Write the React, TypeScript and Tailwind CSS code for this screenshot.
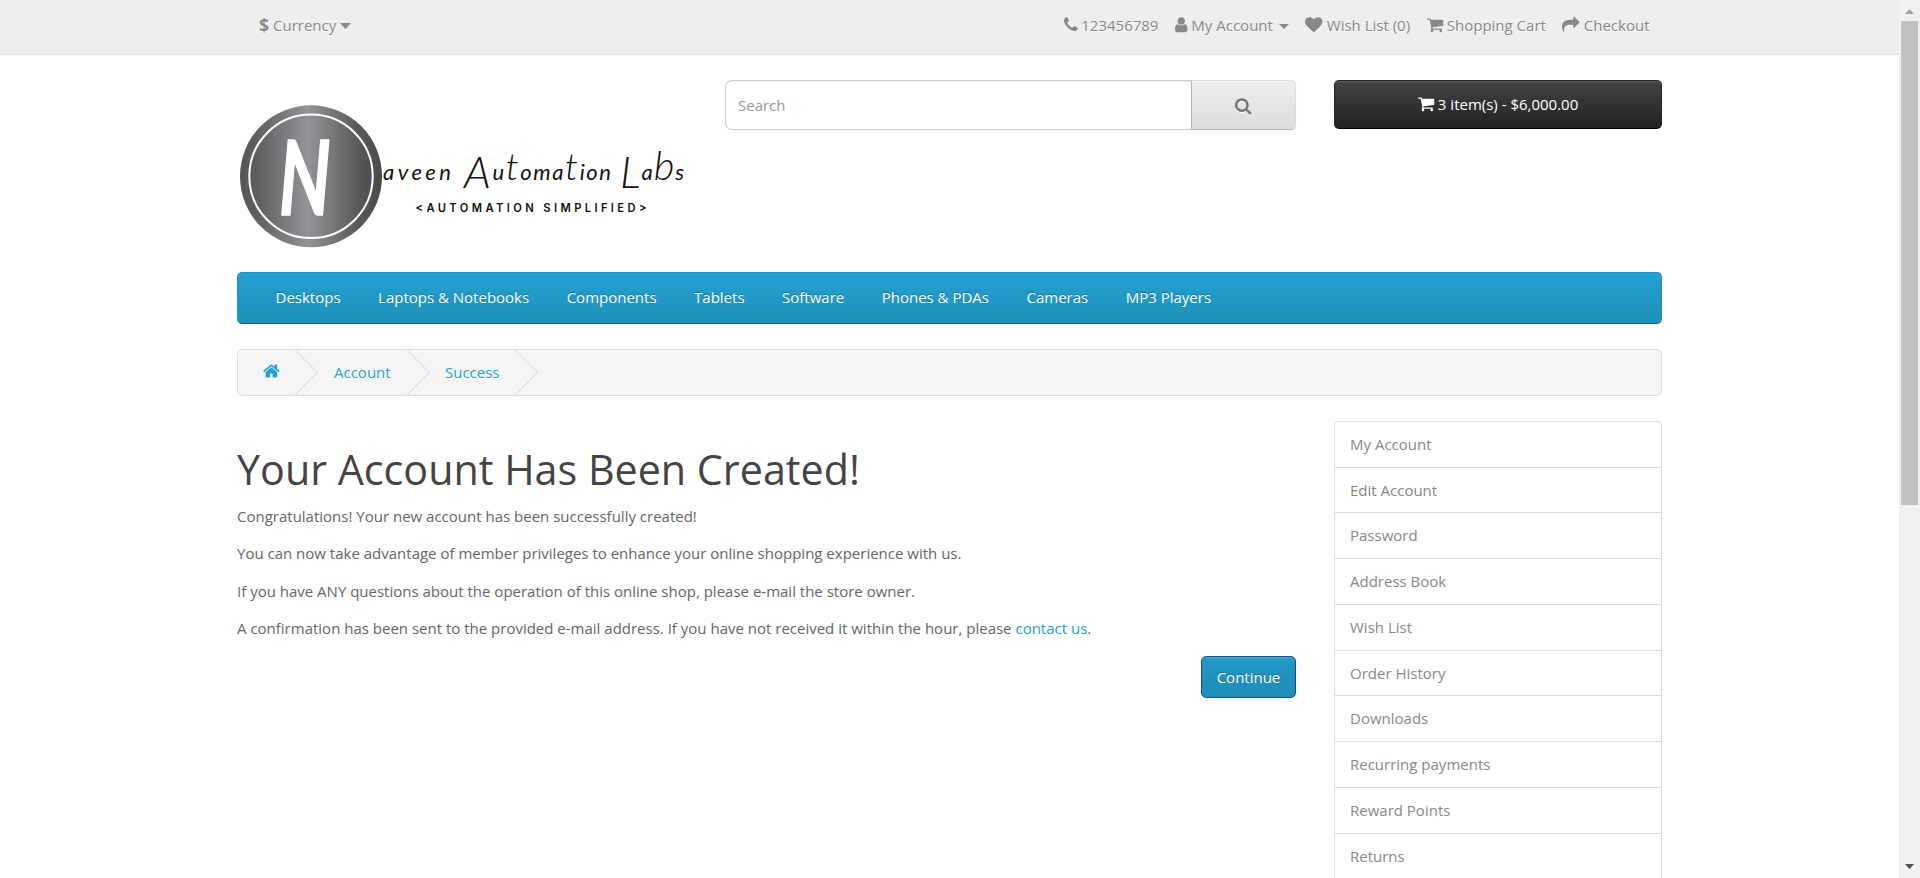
import React from "react";

type GlyphName = "phone" | "user" | "heart" | "cart" | "share" | "search" | "home";

const glyphs: Record<GlyphName, { x: number; w: number; d: string }> = {
  phone: {
    x: 192,
    w: 1408,
    d: "M1600 1240q0 27-10 70.5t-21 68.5q-21 50-122 106-94 51-186 51-27 0-53-3.5t-57.5-12.5-47-14.5-55.5-20.5-49-18q-98-35-175-83-127-79-264-216t-216-264q-48-77-83-175-3-9-18-49t-20.5-55.5-14.5-47-12.5-57.5-3.5-53q0-92 51-186 56-101 106-122 25-11 68.5-21t70.5-10q14 0 21 3 18 6 53 76 11 19 30 54t35 63.5 31 53.5q3 4 17.5 25t21.5 35.5 7 28.5q0 20-28.5 50t-62 55-62 53-28.5 46q0 9 5 22.5t8.5 20.5 14 24 11.5 19q76 137 174 235t235 174q2 1 19 11.5t24 14 20.5 8.5 22.5 5q18 0 46-28.5t53-62 55-62 50-28.5q14 0 28.5 7t35.5 21.5 25 17.5q25 15 53.5 31t63.5 35 54 30q70 35 76 53 3 7 3 21z",
  },
  user: {
    x: 256,
    w: 1280,
    d: "M1536 1399q0 109-62.5 187t-150.5 78h-854q-88 0-150.5-78t-62.5-187q0-85 8.5-160.5t31.5-152 58.5-131 94-89 134.5-34.5q131 128 313 128t313-128q76 0 134.5 34.5t94 89 58.5 131 31.5 152 8.5 160.5zm-256-887q0 159-112.5 271.5t-271.5 112.5-271.5-112.5-112.5-271.5 112.5-271.5 271.5-112.5 271.5 112.5 112.5 271.5z",
  },
  heart: {
    x: 0,
    w: 1792,
    d: "M896 1664q-26 0-44-18l-624-602q-10-8-27.5-26t-55.5-65.5-68-97.5-53.5-121-23.5-138q0-220 127-344t351-124q62 0 126.5 21.5t120 58 95.5 68.5 76 68q36-36 76-68t95.5-68.5 120-58 126.5-21.5q224 0 351 124t127 344q0 221-229 450l-623 600q-18 18-44 18z",
  },
  cart: {
    x: 64,
    w: 1664,
    d: "M704 1536q0 52-38 90t-90 38-90-38-38-90 38-90 90-38 90 38 38 90zm896 0q0 52-38 90t-90 38-90-38-38-90 38-90 90-38 90 38 38 90zm128-1088v512q0 24-16.5 42.5t-40.5 21.5l-1044 122q13 60 13 70 0 16-24 64h920q26 0 45 19t19 45-19 45-45 19h-1024q-26 0-45-19t-19-45q0-11 8-31.5t16-36 21.5-40 15.5-29.5l-177-823h-204q-26 0-45-19t-19-45 19-45 45-19h256q16 0 28.5 6.5t19.5 15.5 13 24.5 8 26 5.5 29.5 4.5 26h1201q26 0 45 19t19 45z",
  },
  share: {
    x: 0,
    w: 1792,
    d: "M1792 640q0 26-19 45l-512 512q-19 19-45 19t-45-19-19-45v-256h-224q-98 0-175.5 6t-154 21.5-133 42.5-105.5 69.5-80 101-48.5 138.5-17.5 181q0 55 5 123 0 6 2.5 23.5t2.5 26.5q0 15-8.5 25t-23.5 10q-16 0-28-17-7-9-13-22t-13.5-30-10.5-24q-127-285-127-451 0-199 53-333 162-403 875-403h224v-256q0-26 19-45t45-19 45 19l512 512q19 19 19 45z",
  },
  search: {
    x: 64,
    w: 1664,
    d: "M1216 832q0-185-131.5-316.5t-316.5-131.5-316.5 131.5-131.5 316.5 131.5 316.5 316.5 131.5 316.5-131.5 131.5-316.5zm512 832q0 52-38 90t-90 38q-54 0-90-38l-343-342q-179 124-399 124-143 0-273.5-55.5t-225-150-150-225-55.5-273.5 55.5-273.5 150-225 225-150 273.5-55.5 273.5 55.5 225 150 150 225 55.5 273.5q0 220-124 399l343 343q37 37 37 90z",
  },
  home: {
    x: 64,
    w: 1664,
    d: "M1472 992v480q0 26-19 45t-45 19h-384v-384h-256v384h-384q-26 0-45-19t-19-45v-480q0-1 .5-3t.5-3l575-474 575 474q1 2 1 6zm223-69l-62 74q-8 9-21 11h-3q-13 0-21-7l-692-577-692 577q-12 8-24 7-13-2-21-11l-62-74q-8-10-7-23.5t11-21.5l719-599q32-26 76-26t76 26l244 204v-195q0-14 9-23t23-9h192q14 0 23 9t9 23v408l219 182q10 8 11 21.5t-7 23.5z",
  },
};

function Glyph({
  name,
  className = "",
  size = 17.5,
}: {
  name: GlyphName;
  className?: string;
  size?: number;
}) {
  const g = glyphs[name];
  return (
    <svg
      className={`inline-block shrink-0 align-[-2.5px] ${className}`}
      width={(g.w / 1792) * size}
      height={size}
      viewBox={`${g.x} 0 ${g.w} 1792`}
      fill="currentColor"
      overflow="visible"
    >
      <path d={g.d} />
    </svg>
  );
}

function Logo() {
  return (
    <svg className="block" width="455" height="152" viewBox="237 100 455 152">
      <defs>
        <linearGradient id="disc" x1="0" x2="1" y1="0" y2="0">
          <stop offset="0" stopColor="#565656" />
          <stop offset="0.1" stopColor="#5c5c5c" />
          <stop offset="0.48" stopColor="#919398" />
          <stop offset="0.56" stopColor="#85878a" />
          <stop offset="0.85" stopColor="#565656" />
          <stop offset="1" stopColor="#4a4a49" />
        </linearGradient>
      </defs>
      <circle cx="311" cy="176.3" r="71" fill="url(#disc)" />
      <circle cx="311" cy="176.3" r="61.7" fill="none" stroke="#fff" strokeWidth="2" />
      <text
        transform="translate(279 215) scale(0.7 1)"
        fontFamily="Lato, sans-serif"
        fontStyle="italic"
        fontSize="103"
        fontWeight="700"
        fill="#fff"
        stroke="#fff"
        strokeWidth="1.5"
        strokeLinejoin="round"
      >
        N
      </text>
      <g fontFamily="Lato, sans-serif" fontStyle="italic" fill="#111" fontSize="22">
        <text x="383" y="180" textLength="68">
          aveen
        </text>
        <text x="464" y="180" textLength="147">
          <tspan dy="8" fontSize="44" fontWeight="300">
            A
          </tspan>
          <tspan dy="-8">u</tspan>
          <tspan fontSize="38" fontWeight="300">t</tspan>
          <tspan>oma</tspan>
          <tspan fontSize="38" fontWeight="300">t</tspan>
          <tspan>ion</tspan>
        </text>
        <text x="620" y="180" textLength="64">
          <tspan dy="8" fontSize="44" fontWeight="300">
            L
          </tspan>
          <tspan dy="-8">a</tspan>
          <tspan fontSize="40" fontWeight="300">b</tspan>
          <tspan>s</tspan>
        </text>
      </g>
      <text
        x="415.5"
        y="212"
        fontFamily="Inter, sans-serif"
        fontSize="11.2"
        fontWeight="600"
        fill="#111"
        textLength="231"
      >
        {"<AUTOMATION SIMPLIFIED>"}
      </text>
    </svg>
  );
}

function Chevron() {
  return (
    <svg className="block shrink-0" width="24" height="45" viewBox="0 0 24 45">
      <path d="M0 0L22.5 22.5L0 45" fill="none" stroke="#ddd" strokeWidth="1.1" />
    </svg>
  );
}

const navItems = [
  "Desktops",
  "Laptops & Notebooks",
  "Components",
  "Tablets",
  "Software",
  "Phones & PDAs",
  "Cameras",
  "MP3 Players",
];

const accountLinks = [
  "My Account",
  "Edit Account",
  "Password",
  "Address Book",
  "Wish List",
  "Order History",
  "Downloads",
  "Recurring payments",
  "Reward Points",
  "Returns",
];

function TopBar() {
  return (
    <div className="h-[55px] border-b border-[#e2e2e2] bg-[#eee] text-[#888] [text-shadow:0_1px_0_#fff]">
      <div className="mx-auto flex w-[1425px] justify-between pt-[13px]">
        <div className="flex items-center pl-[22px]">
          <strong className="text-[17.5px] leading-[25px]">$</strong>
          <span className="ml-[4px]">Currency</span>
          <svg className="ml-[4px] block" width="11" height="6" viewBox="0 0 11 6">
            <path d="M0 0H11L5.5 6Z" fill="currentColor" />
          </svg>
        </div>
        <div className="flex pr-[12.5px]">
          <span className="whitespace-pre">
            <Glyph name="phone" />
            {" "}123456789
          </span>
          <span className="ml-[16.5px] flex items-center">
            <span className="whitespace-pre">
              <Glyph name="user" />
              {" "}My Account
            </span>
            <svg className="ml-[6px] mt-[2px] block" width="10" height="5" viewBox="0 0 10 5">
              <path d="M0 0H10L5 5Z" fill="currentColor" />
            </svg>
          </span>
          <span className="ml-[16.5px] whitespace-pre">
            <Glyph name="heart" />
            {" "}Wish List (0)
          </span>
          <span className="ml-[16.5px] whitespace-pre">
            <Glyph name="cart" />
            {" "}Shopping Cart
          </span>
          <span className="ml-[16.5px] whitespace-pre">
            <Glyph name="share" />
            {" "}Checkout
          </span>
        </div>
      </div>
    </div>
  );
}

function Header() {
  return (
    <header className="flex h-[217px] pt-[25px]">
      <div className="w-[488px] pt-[20px]">
        <Logo />
      </div>
      <div className="flex h-[50px] w-[571px]">
        <div className="flex flex-1 items-center rounded-l-[7px] border border-r-0 border-[#ccc] bg-white pl-[12px] text-[#999] shadow-[inset_0_1px_1px_rgba(0,0,0,0.075)]">
          Search
        </div>
        <button className="flex w-[105px] items-center justify-center rounded-r-[5px] border border-t-[#ddd] border-r-[#ddd] border-b-[#b3b3b3] border-l-[#b7b7b7] bg-linear-to-b from-[#eee] to-[#ddd] text-[#777] shadow-[0_1px_2px_rgba(0,0,0,0.05)]">
          <Glyph name="search" className="mt-[1px] drop-shadow-[0_1px_0_#fff]" />
        </button>
      </div>
      <button className="ml-[38px] h-[49px] w-[328px] rounded-[5px] border border-[#222] border-b-black bg-linear-to-b from-[#444] to-[#222] whitespace-pre text-white shadow-[inset_0_1px_0_rgba(255,255,255,0.15)]">
        <Glyph name="cart" /> 3 item(s) - $6,000.00
      </button>
    </header>
  );
}

function Sidebar() {
  return (
    <aside className="mt-[24.9px] ml-[38px] w-[328px]">
      {accountLinks.map((label) => (
        <a
          key={label}
          className="block h-[45.75px] border-x border-t border-[#ddd] px-[15px] pt-[10px] text-[#888] first:rounded-t-[5px]"
        >
          {label}
        </a>
      ))}
    </aside>
  );
}

function Scrollbar() {
  return (
    <div className="flex h-[878px] w-[21px] flex-col items-center bg-[#f1f1f1]">
      <svg className="block h-[21px] w-[21px] shrink-0" viewBox="0 0 21 21">
        <path d="M6 14L10.5 9L15 14Z" fill="#a3a3a3" />
      </svg>
      <div className="h-[484px] w-[17px] bg-[#c1c1c1]" />
      <svg className="mt-auto block h-[21px] w-[21px] shrink-0" viewBox="0 0 21 21">
        <path d="M6 7L10.5 12L15 7Z" fill="#505050" />
      </svg>
    </div>
  );
}

export default function App() {
  return (
    <div className="flex h-[878px] w-[1920px] overflow-hidden bg-white font-['Open_Sans',sans-serif] text-[15px] leading-[25px] text-[#666]">
      <div className="w-[1899px]">
        <TopBar />
        <div className="mx-auto w-[1425px]">
          <Header />
          <nav className="flex h-[52px] items-center gap-[37.5px] rounded-[5px] border border-[#1f90bb] border-b-[#145e7a] bg-linear-to-b from-[#23a1d1] to-[#1f90bb] pb-[2px] pl-[37.5px] text-white [text-shadow:0_-1px_0_rgba(0,0,0,0.25)]">
            {navItems.map((item) => (
              <a key={item}>{item}</a>
            ))}
          </nav>
          <div className="mt-[25px] flex h-[47px] items-center rounded-[5px] border border-[#ddd] bg-[#f5f5f5] text-[#23a1d1] [text-shadow:0_1px_0_#fff]">
            <a className="w-[57px] pl-[25px]">
              <Glyph name="home" size={18} className="-mt-px mb-px" />
            </a>
            <Chevron />
            <a className="w-[88px] pl-[15px]">Account</a>
            <Chevron />
            <a className="w-[84px] pl-[14px]">Success</a>
            <Chevron />
          </div>
          <div className="flex h-[482px] items-start overflow-hidden">
            <main className="w-[1059px]">
              <h1 className="mt-[51px] text-[41.25px] leading-[45px] text-[#444]">
                Your Account Has Been Created!
              </h1>
              <div className="mt-[11.5px] flex flex-col gap-[12.5px]">
                <p>Congratulations! Your new account has been successfully created!</p>
                <p>
                  You can now take advantage of member privileges to enhance your online shopping
                  experience with us.
                </p>
                <p>
                  If you have ANY questions about the operation of this online shop, please e-mail
                  the store owner.
                </p>
                <p>
                  A confirmation has been sent to the provided e-mail address. If you have not
                  received it within the hour, please{" "}
                  <a className="text-[#23a1d1]">contact us</a>.
                </p>
              </div>
              <div className="mt-[15px] flex justify-end">
                <button className="h-[42px] w-[95px] rounded-[5px] border border-[#1b4f72] bg-linear-to-b from-[#229ac8] to-[#1f90bb] to-60% text-white shadow-[inset_0_1px_0_rgba(255,255,255,0.2)] [text-shadow:0_-1px_0_rgba(0,0,0,0.25)]">
                  Continue
                </button>
              </div>
            </main>
            <Sidebar />
          </div>
        </div>
      </div>
      <Scrollbar />
    </div>
  );
}
